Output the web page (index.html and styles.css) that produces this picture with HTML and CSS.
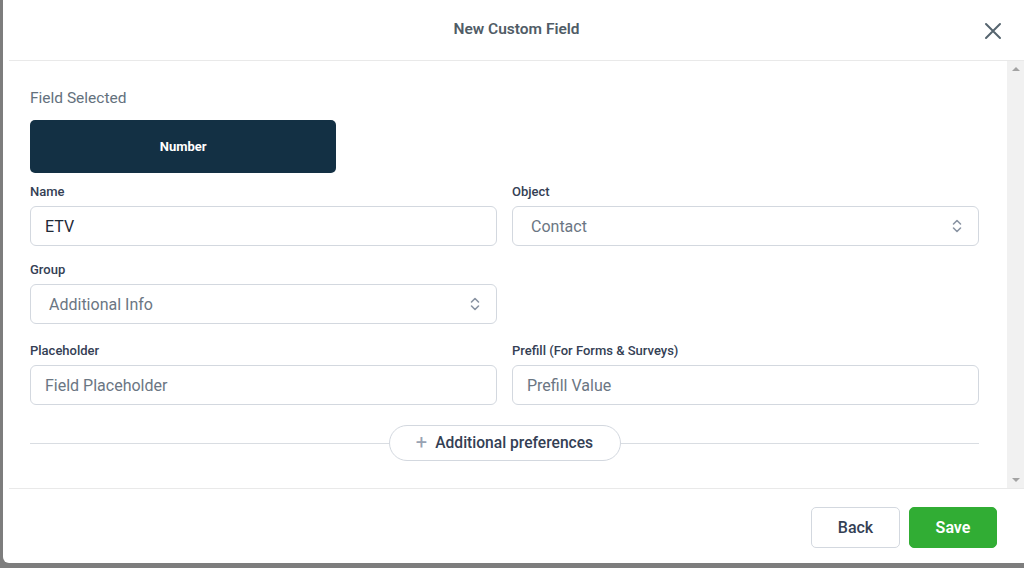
FILE: index.html
```html
<!DOCTYPE html>
<html lang="en">
<head>
  <meta charset="UTF-8" />
  <title>New Custom Field</title>
  <link rel="stylesheet" href="styles.css">
</head>
<body>

  <div class="modal">
    <header class="modal-head">
      <h2 class="modal-title">New Custom Field</h2>
      <button class="close-btn" aria-label="Close">
        <svg width="18" height="18" viewBox="0 0 18 18"><path d="M2 2 L16 16 M16 2 L2 16" stroke="#56656f" stroke-width="2" stroke-linecap="round"/></svg>
      </button>
    </header>

    <div class="modal-main">
      <div class="modal-body">
        <p class="section-title">Field Selected</p>
        <div class="type-grid">
          <div class="type-card">Number</div>
        </div>

        <div class="form-grid">
          <div class="field">
            <label>Name</label>
            <div class="input filled">ETV</div>
          </div>
          <div class="field">
            <label>Object</label>
            <div class="input select">Contact
              <svg class="updown" width="10" height="16" viewBox="0 0 10 16"><path d="M1.5 6 L5 2.5 L8.5 6 M1.5 10 L5 13.5 L8.5 10" fill="none" stroke="#8a94a3" stroke-width="1.6" stroke-linecap="round" stroke-linejoin="round"/></svg>
            </div>
          </div>
          <div class="field row-gap">
            <label>Group</label>
            <div class="input select">Additional Info
              <svg class="updown" width="10" height="16" viewBox="0 0 10 16"><path d="M1.5 6 L5 2.5 L8.5 6 M1.5 10 L5 13.5 L8.5 10" fill="none" stroke="#8a94a3" stroke-width="1.6" stroke-linecap="round" stroke-linejoin="round"/></svg>
            </div>
          </div>
          <div class="field row-gap"></div>
          <div class="field row-gap-lg">
            <label>Placeholder</label>
            <div class="input">Field Placeholder</div>
          </div>
          <div class="field row-gap-lg">
            <label>Prefill (For Forms &amp; Surveys)</label>
            <div class="input">Prefill Value</div>
          </div>
        </div>

        <div class="divider">
          <button class="pill-btn"><span class="plus">+</span> Additional preferences</button>
        </div>
      </div>

      <div class="scrollbar">
        <span class="arrow up"></span>
        <span class="arrow down"></span>
      </div>
    </div>

    <footer class="modal-foot">
      <button class="btn btn-back">Back</button>
      <button class="btn btn-save">Save</button>
    </footer>
  </div>

</body>
</html>
```

FILE: styles.css
```css
html, body {
  height: 100%;
}
body {
  margin: 0;
  font-family: Roboto, 'Liberation Sans', sans-serif;
  background: #7d7d7d;
  overflow: hidden;
}
.modal {
  margin-left: 3px;
  width: 1021px;
  height: 563px;
  background: #fff;
  border-bottom-left-radius: 6px;
  display: flex;
  flex-direction: column;
}
.modal-head {
  flex: none;
  height: 60px;
  margin-left: 6px;
  border-bottom: 1px solid #e9e9e9;
  display: flex;
  align-items: center;
  justify-content: center;
  position: relative;
}
.modal-title {
  margin: 0 0 2px;
  font-size: 15.5px;
  font-weight: 600;
  color: #505c66;
}
.close-btn {
  position: absolute;
  right: 22px;
  top: 22px;
  background: none;
  border: none;
  padding: 0;
  width: 18px;
  height: 18px;
  cursor: pointer;
}
.modal-main {
  flex: 1;
  margin-left: 6px;
  display: flex;
  border-bottom: 1px solid #e9e9e9;
}
.modal-body {
  flex: 1;
  padding: 27px 28px 0 21px;
}
.section-title {
  margin: 0;
  font-size: 15.5px;
  line-height: 20px;
  color: #64717d;
}
.type-grid {
  margin-top: 12px;
  display: grid;
  grid-template-columns: repeat(3, 1fr);
  gap: 15px;
}
.type-card {
  height: 53px;
  background: #133044;
  border-radius: 5px;
  color: #fff;
  font-size: 13px;
  font-weight: 700;
  display: flex;
  align-items: center;
  justify-content: center;
}
.form-grid {
  margin-top: 9px;
  display: grid;
  grid-template-columns: 1fr 1fr;
  column-gap: 15px;
}
.row-gap { margin-top: 14px; }
.row-gap-lg { margin-top: 17px; }
.field label {
  display: block;
  font-size: 13px;
  line-height: 18px;
  font-weight: 500;
  color: #344054;
  margin: 1px 0 5px;
}
.input {
  height: 40px;
  box-sizing: border-box;
  border: 1px solid #d3d8df;
  border-radius: 6px;
  padding: 0 14px;
  display: flex;
  align-items: center;
  font-size: 16px;
  color: #6b7683;
}
.input.filled {
  color: #1f2a37;
}
.input.select {
  padding: 0 16px 0 18px;
  justify-content: space-between;
}
.divider {
  margin-top: 20px;
  display: flex;
  align-items: center;
  justify-content: center;
  position: relative;
}
.divider::before {
  content: '';
  position: absolute;
  left: 0;
  right: 0;
  top: 50%;
  border-top: 1px solid #d9dde2;
}
.pill-btn {
  position: relative;
  height: 36px;
  width: 232px;
  background: #fff;
  border: 1px solid #d3d8df;
  border-radius: 18px;
  font-family: inherit;
  font-size: 15.6px;
  font-weight: 500;
  color: #344054;
  display: flex;
  align-items: center;
  justify-content: center;
  gap: 8px;
}
.plus {
  color: #98a2b3;
  font-size: 20px;
  font-weight: 400;
  line-height: 1;
  margin-top: -2px;
}
.scrollbar {
  width: 17px;
  background: #f1f1f1;
  display: flex;
  flex-direction: column;
  justify-content: space-between;
  align-items: center;
  padding: 6px 0;
}
.arrow {
  width: 0;
  height: 0;
  border-left: 4px solid transparent;
  border-right: 4px solid transparent;
}
.arrow.up { border-bottom: 4px solid #a3a3a3; }
.arrow.down { border-top: 4px solid #a3a3a3; }
.modal-foot {
  flex: none;
  height: 74px;
  box-sizing: border-box;
  margin-left: 6px;
  padding: 18px 27px 0 0;
  display: flex;
  justify-content: flex-end;
  align-items: flex-start;
  gap: 9px;
}
.btn {
  height: 41px;
  border-radius: 5px;
  font-family: inherit;
  font-size: 16px;
  font-weight: 500;
  cursor: pointer;
}
.btn-back {
  width: 89px;
  background: #fff;
  border: 1px solid #d3d8df;
  color: #344054;
}
.btn-save {
  width: 88px;
  background: #31ad34;
  border: 1px solid #31ad34;
  color: #fff;
  font-weight: 600;
}
```
